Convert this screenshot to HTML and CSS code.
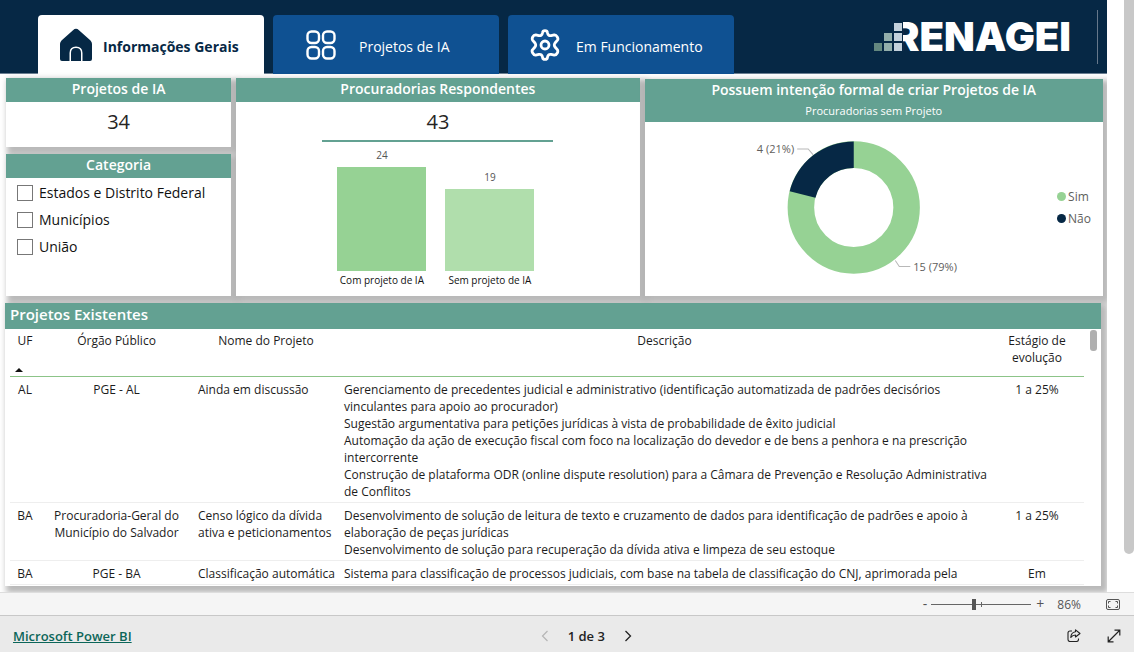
FILE: index.html
```html
<!DOCTYPE html>
<html lang="pt-BR">
<head>
<meta charset="utf-8">
<title>Renagei - Informações Gerais</title>
<link rel="stylesheet" href="styles.css">
</head>
<body>
<div class="viewport">
  <main class="report">
    <header class="top">
      <nav class="tabs">
        <button class="tab active" type="button">
          <svg class="tab-icon" viewBox="0 0 34 34" width="34" height="34"><path d="M14 2.200Q17 -.6 20 2.200L31.500 12.500Q33 14 33 16V31Q33 33 31 33H23.500V25Q23.500 18.500 17 18.500T10.500 25V33H3Q1 33 1 31V16Q1 14 2.500 12.500Z" fill="#062845"/><path d="M12 33V25Q12 20 17 20T22 25V33Z" fill="#062845"/></svg>
          <span>Informações Gerais</span>
        </button>
        <button class="tab second" type="button">
          <svg class="tab-icon" viewBox="0 0 30 30" width="30" height="30" fill="none" stroke="#fff" stroke-width="2.400"><rect x="1.500" y="1.500" width="11.500" height="11.500" rx="4"/><rect x="17" y="1.500" width="11.500" height="11.500" rx="4"/><rect x="1.500" y="17" width="11.500" height="11.500" rx="4"/><rect x="17" y="17" width="11.500" height="11.500" rx="4"/></svg>
          <span>Projetos de IA</span>
        </button>
        <button class="tab third" type="button">
          <svg class="tab-icon" viewBox="0 0 30 32" width="30" height="32" fill="none" stroke="#fff" stroke-width="2.800" stroke-linejoin="round"><path d="M12.600 3.500Q12.800 1.600 15 1.600T17.400 3.500Q18 7.200 21.200 6.600L24.300 5.900Q26 5.700 27.300 8T27.300 11.300L25 14Q23.600 16 25 18L27.300 20.700Q28.300 22 27.300 24T24.300 26.100L21.200 25.400Q18 24.800 17.400 28.500Q17.200 30.400 15 30.400T12.600 28.500Q12 24.800 8.800 25.400L5.700 26.100Q4 26.300 2.700 24T2.700 20.700L5 18Q6.400 16 5 14L2.700 11.300Q1.700 10 2.700 8T5.700 5.900L8.800 6.600Q12 7.200 12.600 3.500Z"/><circle cx="15" cy="16" r="4"/></svg>
          <span>Em Funcionamento</span>
        </button>
      </nav>
      <div class="brand">
        <svg class="brand-mark" viewBox="0 0 29 31" width="29" height="31"><path d="M19 0h10v31H19z" fill="#062845"/><path d="M0 21h8v8H0z" fill="#63877f"/><path d="M10 11h8v8h-8zM10 21h8v8h-8z" fill="#92aeab"/><path d="M20 1h8v8h-8zM20 11h8v8h-8zM20 21h8v8h-8z" fill="#c3d1dc"/></svg>
        <span class="brand-name">RENAGEI</span>
      </div>
    </header>

    <div class="cards">
      <div class="stack">
        <section class="card">
          <h2 class="card-title">Projetos de IA</h2>
          <p class="number">34</p>
        </section>
        <section class="card grow">
          <h2 class="card-title">Categoria</h2>
          <div class="filters">
            <label class="filter"><input type="checkbox">Estados e Distrito Federal</label>
            <label class="filter"><input type="checkbox">Municípios</label>
            <label class="filter"><input type="checkbox">União</label>
          </div>
        </section>
      </div>

      <section class="card">
        <h2 class="card-title">Procuradorias Respondentes</h2>
        <p class="number">43</p>
        <div class="bars">
          <div class="bar-col"><span class="bar-value">24</span><div class="bar dark" style="height:104px"></div><span class="bar-name">Com projeto de IA</span></div>
          <div class="bar-col"><span class="bar-value">19</span><div class="bar light" style="height:82px"></div><span class="bar-name">Sem projeto de IA</span></div>
        </div>
      </section>

      <section class="card last">
        <h2 class="card-title tall">Possuem intenção formal de criar Projetos de IA<small>Procuradorias sem Projeto</small></h2>
        <div class="donut-row">
          <svg class="donut" viewBox="0 0 412 173">
            <circle cx="208.500" cy="85" r="52.800" fill="none" stroke="#96d294" stroke-width="26.500"/>
            <path d="M208.500 19A66 66 0 0 0 144.500 68.800L170.200 75.300A39.500 39.500 0 0 1 208.500 45.500Z" fill="#062845"/>
            <path d="M152 26.500h11l5 6M250 138l4 6h11" fill="none" stroke="#b8b8b8"/>
            <text x="149" y="31" text-anchor="end">4 (21%)</text>
            <text x="268" y="148">15 (79%)</text>
          </svg>
          <ul class="legend">
            <li><i class="dot yes"></i>Sim</li>
            <li><i class="dot no"></i>Não</li>
          </ul>
        </div>
      </section>
    </div>

    <section class="panel">
      <h2 class="panel-title">Projetos Existentes</h2>
      <div class="panel-body">
        <table class="projects">
          <colgroup><col class="c-uf"><col class="c-org"><col class="c-name"><col><col class="c-stage"></colgroup>
          <thead>
            <tr><th><div class="sorted">UF<svg viewBox="0 0 8 4" width="8" height="4"><path d="M0 4 4 0 8 4z" fill="#111"/></svg></div></th><th>Órgão Público</th><th>Nome do Projeto</th><th>Descrição</th><th>Estágio de evolução</th></tr>
          </thead>
          <tbody>
            <tr><td>AL</td><td>PGE - AL</td><td class="l">Ainda em discussão</td>
              <td class="l">Gerenciamento de precedentes judicial e administrativo (identificação automatizada de padrões decisórios<br>vinculantes para apoio ao procurador)<br>Sugestão argumentativa para petições jurídicas à vista de probabilidade de êxito judicial<br>Automação da ação de execução fiscal com foco na localização do devedor e de bens a penhora e na prescrição<br>intercorrente<br>Construção de plataforma ODR (online dispute resolution) para a Câmara de Prevenção e Resolução Administrativa<br>de Conflitos</td><td>1 a 25%</td></tr>
            <tr><td>BA</td><td>Procuradoria-Geral do<br>Município do Salvador</td><td class="l">Censo lógico da dívida<br>ativa e peticionamentos</td>
              <td class="l">Desenvolvimento de solução de leitura de texto e cruzamento de dados para identificação de padrões e apoio à<br>elaboração de peças jurídicas<br>Desenvolvimento de solução para recuperação da dívida ativa e limpeza de seu estoque</td><td>1 a 25%</td></tr>
            <tr><td>BA</td><td>PGE - BA</td><td class="l">Classificação automática</td>
              <td class="l">Sistema para classificação de processos judiciais, com base na tabela de classificação do CNJ, aprimorada pela</td><td>Em</td></tr>
          </tbody>
        </table>
        <div class="rail"><div class="rail-thumb"></div></div>
      </div>
    </section>
  </main>
  <div class="page-scroll"><div class="page-thumb"></div></div>
</div>

<div class="zoombar">
  <button type="button" class="plain" aria-label="Reduzir">-</button>
  <div class="slider"><input type="range" min="0" max="100" value="42" aria-label="Zoom"><i class="tick"></i></div>
  <button type="button" class="plain" aria-label="Ampliar">+</button>
  <span class="percent">86%</span>
  <button type="button" class="plain" aria-label="Ajustar à página"><svg viewBox="0 0 14 11" width="14" height="11" fill="none" stroke="#555"><rect x=".5" y=".5" width="13" height="10" rx="1.500"/><path d="M2.500 4.500v-2h2M9.500 2.500h2v2M11.500 6.500v2h-2M4.500 8.500h-2v-2"/></svg></button>
</div>

<footer class="footer">
  <a class="pbi" href="#">Microsoft Power BI</a>
  <div class="pager">
    <button type="button" class="plain" aria-label="Página anterior" disabled><svg viewBox="0 0 8 12" width="8" height="12" fill="none" stroke="#b5b5b5" stroke-width="1.200"><path d="M6.500 1 1.500 6l5 5"/></svg></button>
    <span>1 de 3</span>
    <button type="button" class="plain" aria-label="Próxima página"><svg viewBox="0 0 8 12" width="8" height="12" fill="none" stroke="#222" stroke-width="1.300"><path d="M1.500 1l5 5-5 5"/></svg></button>
  </div>
  <div class="actions">
    <button type="button" class="plain" aria-label="Compartilhar"><svg viewBox="0 0 14 13" width="14" height="13" fill="none" stroke="#222" stroke-width="1.100" stroke-linejoin="round"><path d="M5 2H3Q1 2 1 4v6.500Q1 12.500 3 12.500h6.500q2 0 2-2V9.500"/><path d="M8.500 .8 13 4.500 8.500 8V6Q5.500 6 3.800 8.500 4 3.500 8.500 2.800Z"/></svg></button>
    <button type="button" class="plain" aria-label="Tela cheia"><svg viewBox="0 0 14 14" width="14" height="14" fill="none" stroke="#222" stroke-width="1.200"><path d="M1.500 12.500l11-11M7.500 1.200h5.300v5.300M1.200 7.500v5.300h5.300"/></svg></button>
  </div>
</footer>
</body>
</html>
```
FILE: styles.css
```css
* { box-sizing: border-box; }
body { margin: 0; height: 100vh; display: flex; flex-direction: column; background: #fff; color: #1c1c1c; font-family: "Open Sans", "Noto Sans", sans-serif; font-size: 12px; overflow: hidden; }
h2, p, ul { margin: 0; padding: 0; }
button { font: inherit; border: 0; cursor: pointer; }

.viewport { flex: 1; min-height: 0; display: flex; }
.report { flex: 1; min-width: 0; display: flex; flex-direction: column; overflow: hidden; }
.page-scroll { width: 27px; padding-left: 17px; }
.page-thumb { height: 554px; border-radius: 0 0 5px 5px; background: #c8c8c8; }

.top { display: flex; justify-content: space-between; height: 74px; padding-left: 38px; background: #062845; border-bottom: 1px solid #6b7f92; }
.tabs { display: flex; gap: 9px; padding-top: 15px; }
.tab { display: flex; align-items: center; width: 226px; height: 59px; padding: 0 0 0 21px; border-radius: 4px 4px 0 0; background: #0f5192; color: #fff; font-size: 14px; }
.tab.active { background: #fff; color: #062845; font-weight: 700; gap: 10px; }
.tab.second { padding-left: 33px; gap: 23px; }
.tab.third { padding-left: 22px; gap: 16px; }
.tab-icon { flex: none; }
.tab span { padding-top: 4px; white-space: nowrap; }
.brand { display: flex; align-items: center; height: 54px; margin: 10px 9px 0 0; padding-right: 26px; border-right: 1px solid #66788b; }
.brand-mark { position: relative; z-index: 1; flex: none; }
.brand-name { margin-left: -10px; color: #fff; font: 900 40px/44px Inter, sans-serif; }

.cards { display: grid; grid-template: minmax(0, 1fr) / 225fr 403fr 458fr; flex: none; gap: 5px; margin: 4px 4px 0 6px; height: 218px; }
.stack { display: flex; flex-direction: column; gap: 7px; }
.card, .panel { background: #fff; box-shadow: 4px 4px 6px 3px rgba(0, 0, 0, .28); }
.card { display: flex; flex-direction: column; min-width: 0; min-height: 0; }
.stack .card:first-child { height: 69px; }
.grow { flex: 1; }
.card-title { flex: none; height: 24px; background: #63a192; color: #fff; font-size: 14px; line-height: 22px; font-weight: 600; text-align: center; white-space: nowrap; }
.last { margin-top: 1px; }
.card-title.tall { height: 43px; }
.card-title small { display: block; font-size: 11px; line-height: 20px; font-weight: 400; }
.number { font-size: 20px; line-height: 38px; padding-top: 1px; height: 38px; text-align: center; color: #252423; }
.filters { padding: 1px 0 0 11px; }
.filter { display: flex; align-items: center; height: 27px; gap: 6px; font-size: 14px; white-space: nowrap; color: #111; }
.filter input { appearance: none; width: 16px; height: 16px; margin: 0; border: 1px solid #777; background: #fff; }

.bars { display: flex; align-items: flex-end; justify-content: center; gap: 19px; flex: 1; min-height: 0; width: 231px; margin: 0 auto; padding: 0 4px 7px 0; border-top: 2px solid #63a192; }
.bar-col { display: flex; flex-direction: column; align-items: center; width: 89px; }
.bar { width: 100%; }
.bar.dark { background: #96d294; }
.bar.light { background: #b0deac; }
.bar-value { font-size: 10px; line-height: 14px; height: 19px; color: #555; }
.bar-name { font-size: 10px; line-height: 18px; white-space: nowrap; color: #111; }

.donut-row { display: flex; align-items: center; flex: 1; min-height: 0; padding-right: 12px; }
.donut { flex: 1; min-width: 0; height: 100%; }
.donut text { font-size: 11px; fill: #605e5c; }
.legend { list-style: none; padding-bottom: 3px; color: #605e5c; font-size: 12px; }
.legend li { display: flex; align-items: center; gap: 2px; height: 22px; }
.dot { width: 9px; height: 9px; border-radius: 50%; }
.yes { background: #96d294; }
.no { background: #062845; }

.panel { flex: 1; min-height: 0; display: flex; flex-direction: column; margin: 7px 6px 6px 5px; }
.panel-title { flex: none; height: 26px; padding-left: 5px; background: #63a192; color: #fff; font-size: 15px; line-height: 23px; font-weight: 600; }
.panel-body { flex: 1; min-height: 0; display: flex; overflow: hidden; padding-left: 5px; }
.projects { flex: 1; min-width: 0; width: 100%; border-collapse: separate; border-spacing: 0; table-layout: fixed; line-height: 17px; align-self: flex-start; }
.c-uf { width: 30px; }
.c-org { width: 153px; }
.c-name { width: 146px; }
.c-stage { width: 94px; }
.projects th { height: 48px; padding: 3px 4px 0; font-weight: 400; vertical-align: top; border-bottom: 1px solid #8cc488; }
.projects th:last-child { padding: 3px 12px 0; }
.projects td { padding: 4px 0 2px; vertical-align: top; text-align: center; white-space: nowrap; border-bottom: 1px solid #eee; }
.projects td.l { text-align: left; padding-left: 5px; }
.sorted { display: flex; flex-direction: column; align-items: center; gap: 19px; }
.sorted svg { margin-right: 12px; }
.rail { width: 17px; padding: 1px 4px 0 6px; }
.rail-thumb { height: 21px; border-radius: 3px; background: #b0b0b0; }

.zoombar { display: flex; align-items: center; justify-content: flex-end; height: 24px; padding-right: 14px; background: #f5f5f5; border-top: 1px solid #ddd; border-bottom: 1px solid #c8c8c8; color: #555; }
.plain { display: flex; align-items: center; padding: 0; background: none; color: inherit; }
.slider { position: relative; display: flex; width: 100px; margin: 0 5px 0 4px; }
.slider input { appearance: none; width: 100%; height: 11px; margin: 0; background: linear-gradient(#666, #666) center / 100% 1px no-repeat; }
.slider input::-webkit-slider-thumb { appearance: none; width: 4px; height: 11px; background: #555; }
.tick { position: absolute; left: 50px; top: 3px; width: 1px; height: 5px; background: #666; }
.percent { margin: 0 25px 0 13px; }
.zoombar .plain { font-size: 14px; line-height: 14px; }

.footer { display: flex; align-items: center; justify-content: space-between; height: 36px; padding: 3px 13px 0; background: #eaeaea; }
.pbi { color: #0c6659; font-size: 13px; font-weight: 600; }
.pager { display: flex; align-items: center; gap: 19px; font-size: 13px; font-weight: 600; color: #222; }
.actions { display: flex; gap: 26px; padding-left: 26px; }
```
